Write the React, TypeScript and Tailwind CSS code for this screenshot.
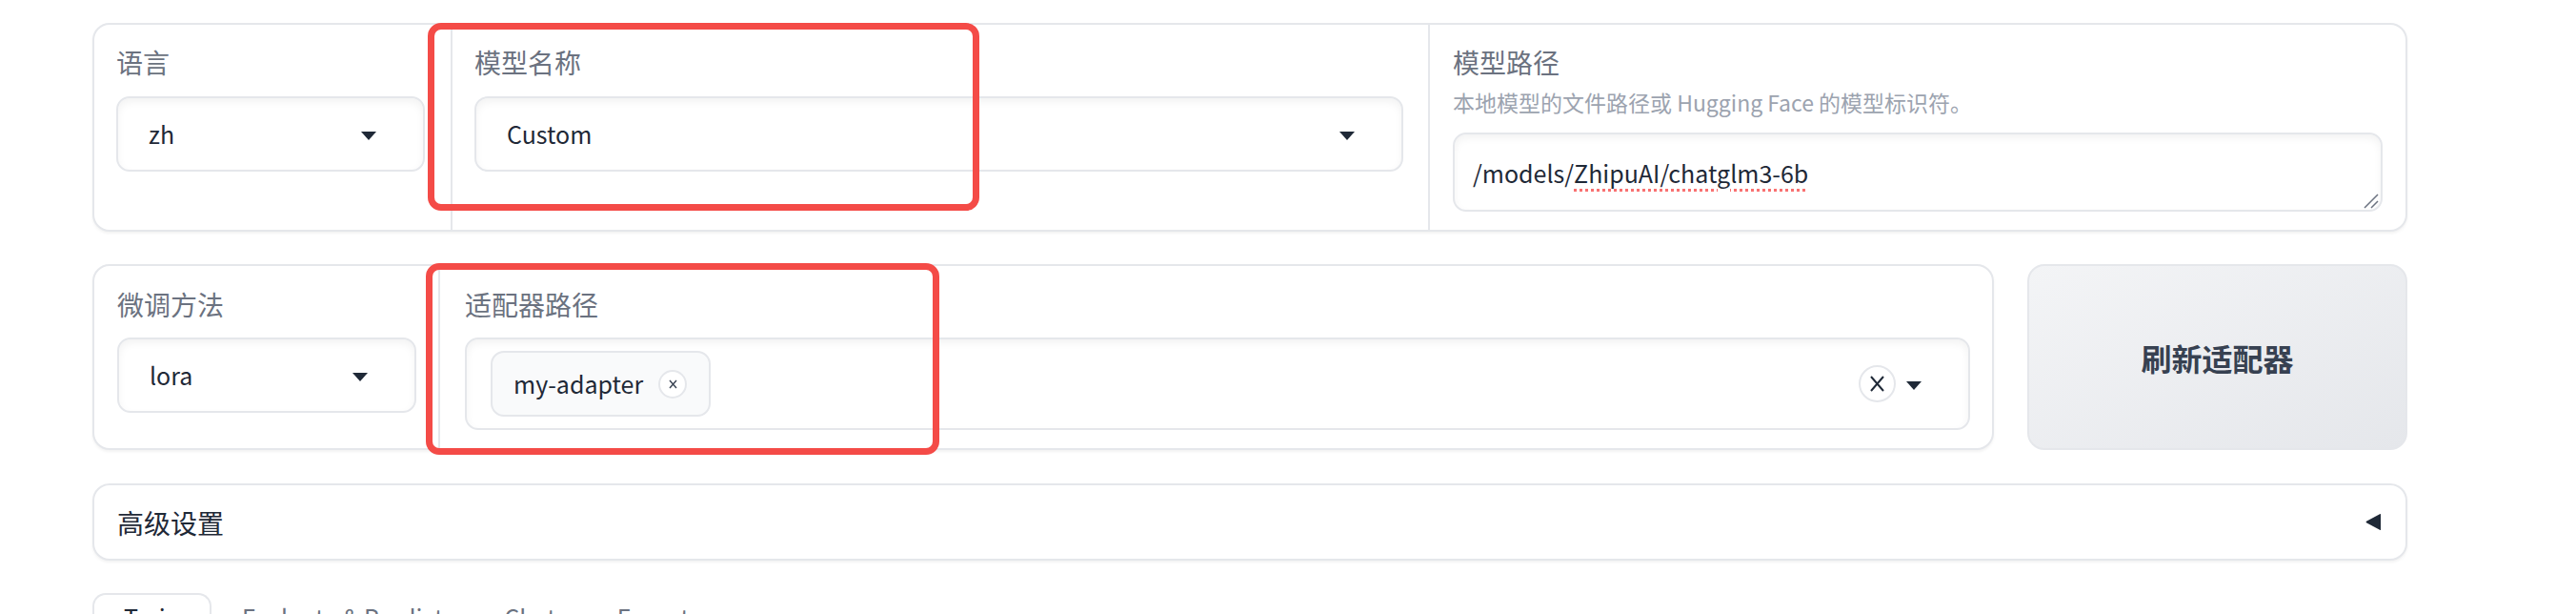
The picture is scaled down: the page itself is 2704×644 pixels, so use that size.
import React from "react";

function Caret() {
  return (
    <svg width="16" height="9" viewBox="0 0 16 9">
      <path d="M0 0H16L8 9Z" fill="#1f2937" />
    </svg>
  );
}

function Label({ text }: { text: string }) {
  return <div className="text-[28px] leading-[36px] text-[#6b7280]">{text}</div>;
}

function Select({ value, width }: { value: string; width: string }) {
  return (
    <div
      className={`${width} mt-[18px] h-[79px] rounded-[14px] border-2 border-[#e5e7eb] bg-white shadow-[inset_0_4px_8px_rgba(0,0,0,0.05)] flex items-center justify-between pl-[32px] pr-[49px] text-[25px] text-[#1f2937]`}
    >
      <span>{value}</span>
      <span className="mt-[4px] flex">
        <Caret />
      </span>
    </div>
  );
}

export default function App() {
  return (
    <div className="relative w-[2704px] h-[644px] overflow-hidden bg-white font-['Noto_Sans_CJK_SC',sans-serif]">
      <div className="ml-[97px] w-[2430px] pt-[24px] flex flex-col">
        {/* row 1 */}
        <div className="flex rounded-[18px] border-2 border-[#e5e7eb] bg-white overflow-hidden shadow-[0_2px_3px_rgba(0,0,0,0.05)]">
          <div className="w-[374px] pl-[23px] pt-[21px]">
            <Label text="语言" />
            <Select value="zh" width="w-[324px]" />
          </div>
          <div className="w-[1026px] border-l-2 border-[#e5e7eb] pl-[23px] pr-[26px] pt-[21px]">
            <Label text="模型名称" />
            <Select value="Custom" width="w-full" />
          </div>
          <div className="flex-1 border-l-2 border-[#e5e7eb] pl-[24px] pr-[24px] pt-[21px] pb-[19px]">
            <Label text="模型路径" />
            <div className="mt-[9px] text-[23px] leading-[30px] text-[#9ca3af]">
              本地模型的文件路径或 Hugging Face 的模型标识符。
            </div>
            <div className="relative mt-[17px] h-[83px] rounded-[14px] border-2 border-[#e5e7eb] bg-white shadow-[inset_0_4px_8px_rgba(0,0,0,0.05)] pl-[19px] pt-[19px] text-[25px] leading-[42px] text-[#1f2937]">
              /models/
              <span className="underline decoration-dotted decoration-[#f87171] decoration-[3px] underline-offset-[6px]">
                ZhipuAI/chatglm3-6b
              </span>
              <svg className="absolute right-[2px] bottom-[1px]" width="16" height="16" viewBox="0 0 16 16">
                <path d="M15 1L1 15M15 8L8 15" stroke="#6b7280" strokeWidth="1.5" />
              </svg>
            </div>
          </div>
        </div>

        {/* row 2 */}
        <div className="mt-[34px] flex gap-[35px]">
          <div className="w-[1996px] flex rounded-[18px] border-2 border-[#e5e7eb] bg-white overflow-hidden shadow-[0_2px_3px_rgba(0,0,0,0.05)]">
            <div className="w-[361px] pl-[24px] pt-[22px]">
              <Label text="微调方法" />
              <div className="mt-[-1px]">
                <Select value="lora" width="w-[314px]" />
              </div>
            </div>
            <div className="flex-1 border-l-2 border-[#e5e7eb] pl-[26px] pr-[23px] pt-[22px] pb-[19px]">
              <Label text="适配器路径" />
              <div className="mt-[17px] h-[97px] rounded-[14px] border-2 border-[#e5e7eb] bg-white shadow-[inset_0_4px_8px_rgba(0,0,0,0.05)] flex items-center pl-[25px] pr-[49px]">
                <div className="h-[69px] rounded-[14px] border-2 border-[#e5e7eb] bg-[#f9fafb] flex items-center pl-[22px] pr-[23px] gap-[16px] text-[25px] text-[#1f2937]">
                  <span>my-adapter</span>
                  <span className="w-[30px] h-[30px] rounded-full border-2 border-[#e5e7eb] bg-white flex items-center justify-center">
                    <svg width="9" height="10" viewBox="0 0 9 10">
                      <path d="M1 1L8 9M8 1L1 9" stroke="#374151" strokeWidth="1.4" />
                    </svg>
                  </span>
                </div>
                <div className="flex-1" />
                <span className="w-[39px] h-[39px] rounded-full border-2 border-[#e5e7eb] bg-white flex items-center justify-center">
                  <svg width="15" height="17" viewBox="0 0 15 17">
                    <path d="M1 1L14 16M14 1L1 16" stroke="#1f2937" strokeWidth="2" />
                  </svg>
                </span>
                <span className="ml-[11px] mt-[4px] flex">
                  <Caret />
                </span>
              </div>
            </div>
          </div>
          <div className="flex-1 rounded-[18px] border-2 border-[#e5e7eb] bg-linear-to-br from-[#f3f4f6] to-[#e5e7eb] flex items-center justify-center text-[32px] font-semibold text-[#374151]">
            刷新适配器
          </div>
        </div>

        {/* accordion */}
        <div className="mt-[35px] h-[81px] rounded-[18px] border-2 border-[#e5e7eb] bg-white shadow-[0_2px_3px_rgba(0,0,0,0.05)] flex items-center justify-between pl-[24px] pr-[24px]">
          <span className="text-[28px] text-[#1f2937]">高级设置</span>
          <svg width="19" height="19" viewBox="0 0 19 19">
            <path d="M17 1.5V17.5Q17 18.5 16 17.8L2 10.3Q1 9.5 2 8.7L16 1.2Q17 0.5 17 1.5Z" fill="#1f2937" />
          </svg>
        </div>

        {/* tabs */}
        <div className="mt-[34px] flex items-start text-[25px] leading-[40px]">
          <div className="rounded-t-[14px] border-2 border-b-0 border-[#e5e7eb] bg-white px-[31px] pt-[3px] h-[60px] text-[#1f2937]">
            Train
          </div>
          <div className="px-[32px] pt-[5px] text-[#6b7280]">Evaluate &amp; Predict</div>
          <div className="px-[32px] pt-[5px] text-[#6b7280]">Chat</div>
          <div className="px-[32px] pt-[5px] text-[#6b7280]">Export</div>
        </div>
      </div>

      {/* annotation boxes */}
      <div className="absolute left-[449px] top-[24px] w-[579px] h-[197px] rounded-[14px] border-[7px] border-[#f44b47]" />
      <div className="absolute left-[447px] top-[276px] w-[539px] h-[201px] rounded-[14px] border-[7px] border-[#f44b47]" />
    </div>
  );
}
